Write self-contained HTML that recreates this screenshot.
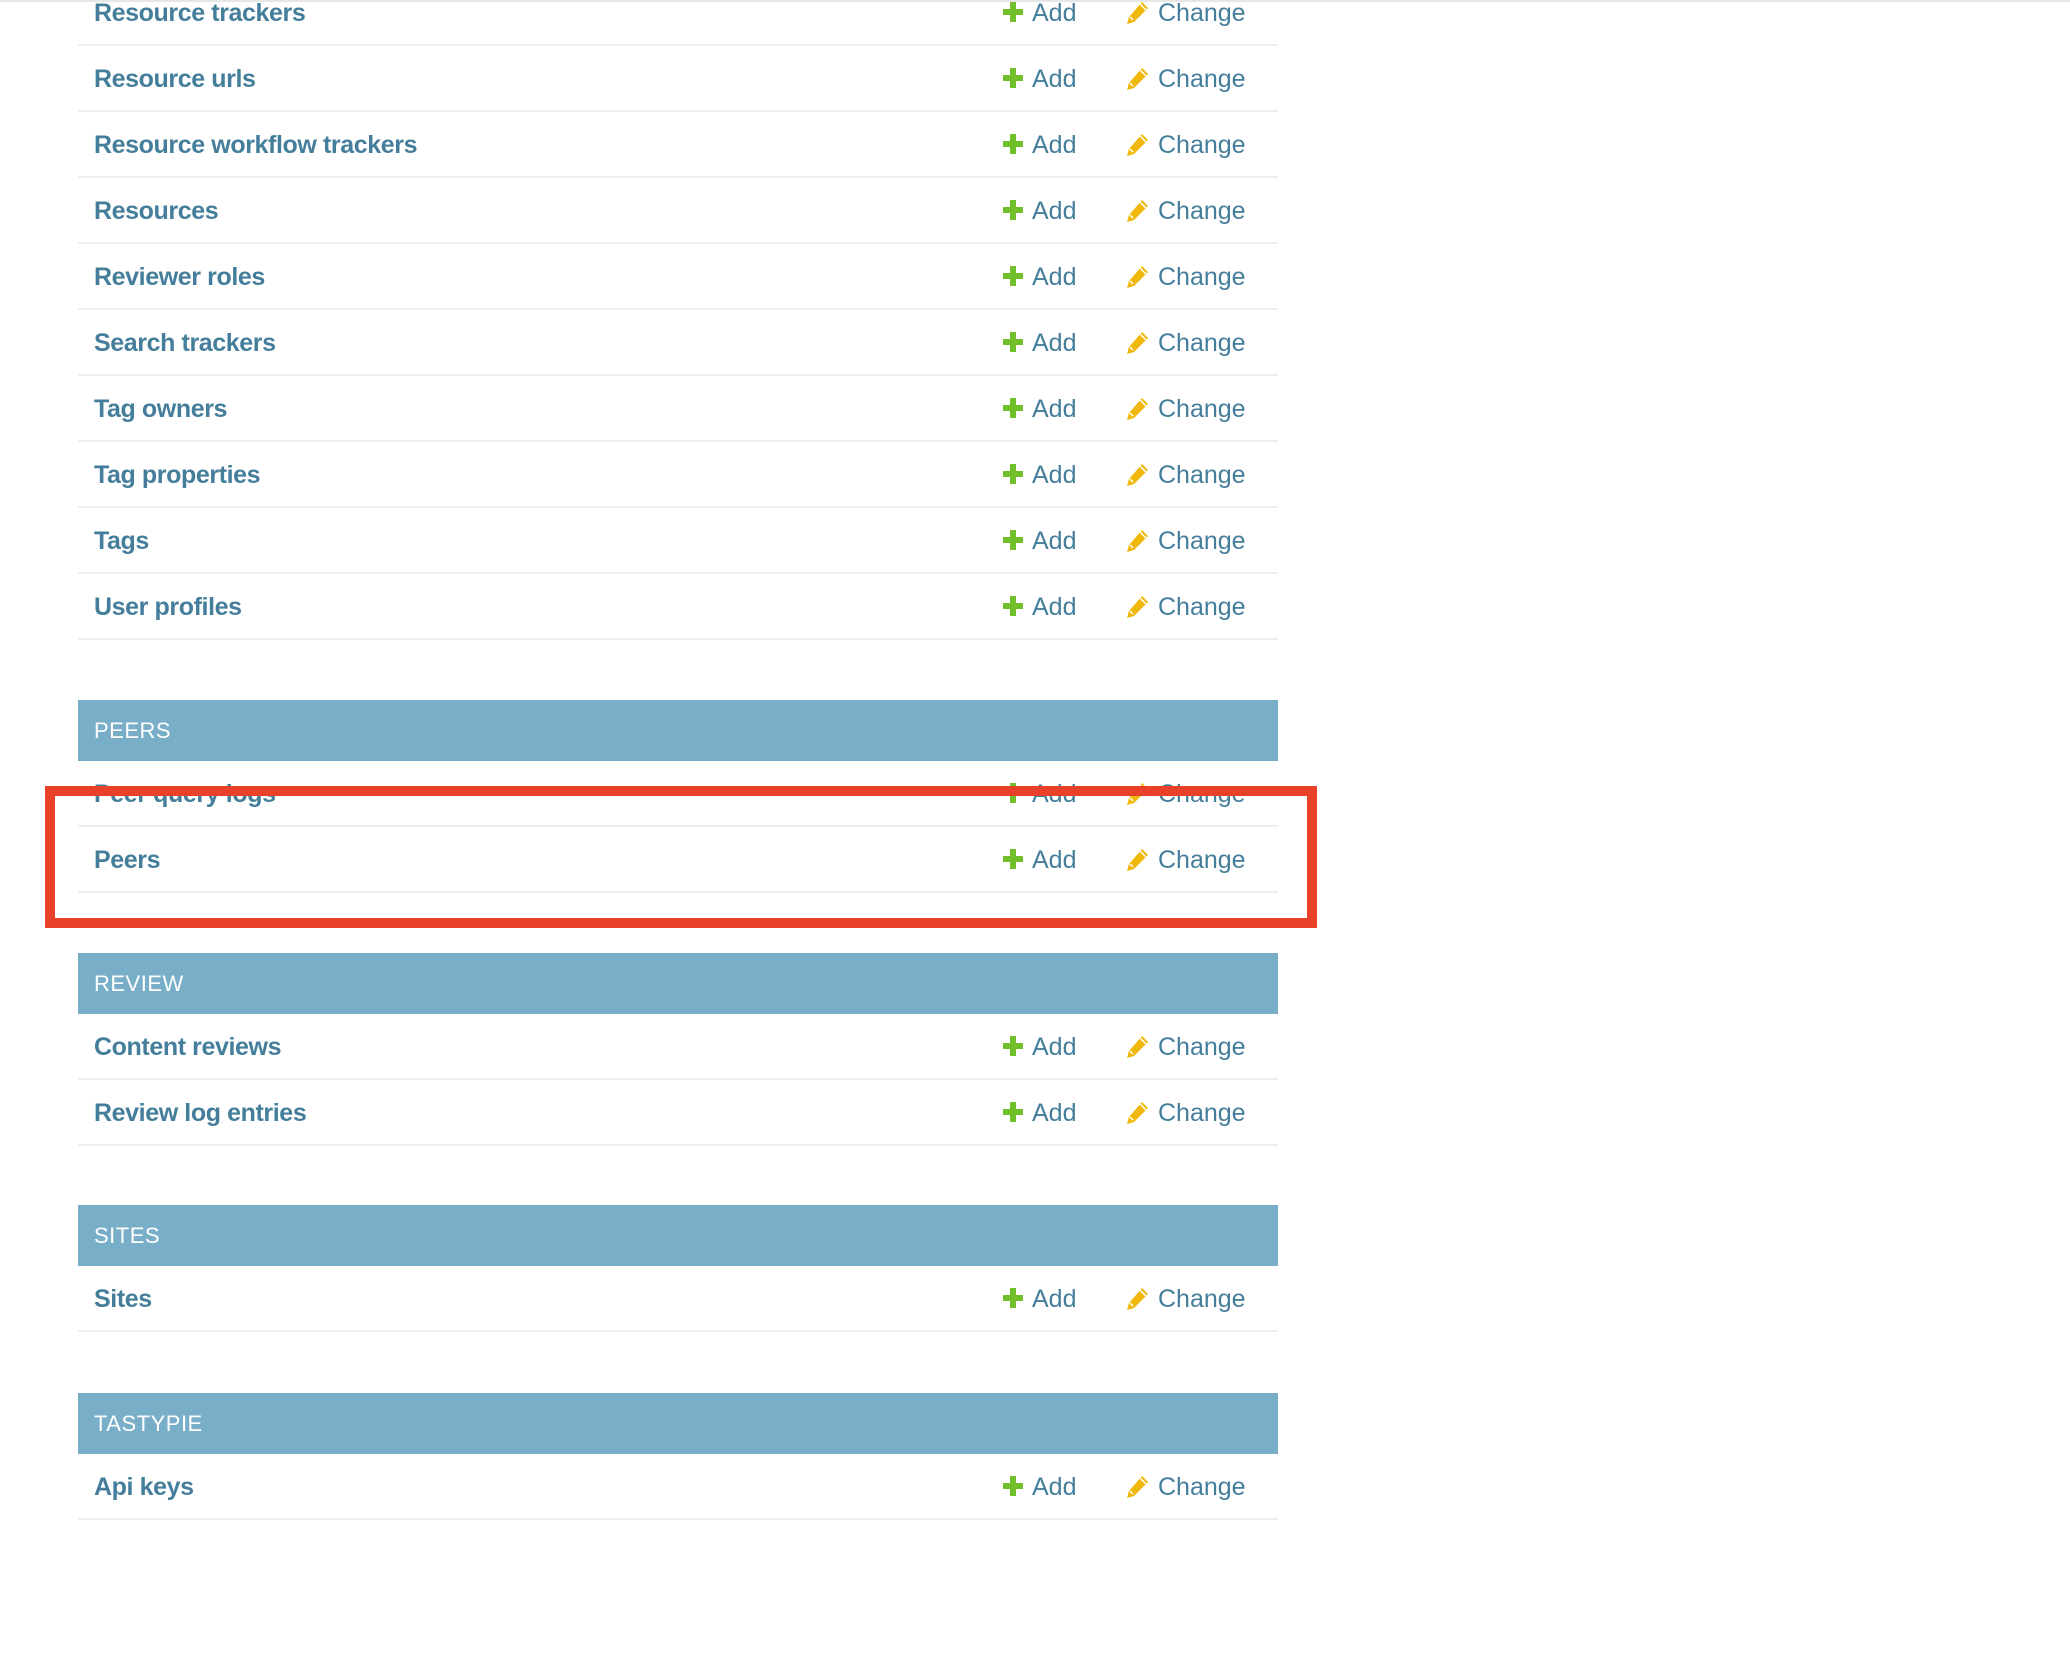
<!DOCTYPE html>
<html><head><meta charset="utf-8"><style>
body{margin:0;width:2070px;height:1656px;background:#fff;position:relative;overflow:hidden;font-family:"Liberation Sans",sans-serif;}
.top{position:absolute;left:0;top:0;width:2070px;height:2px;background:#e6e6e6}
.row{position:absolute;left:78px;width:1200px;height:66px;border-bottom:2px solid #eee;box-sizing:border-box}
.row .n{position:absolute;left:16px;top:1px;line-height:64px;font-size:25px;font-weight:bold;color:#447e9b;letter-spacing:-0.4px}
.row .a,.row .c{position:absolute;top:1px;line-height:64px;font-size:25px;color:#447e9b;letter-spacing:0px}
.row .a{left:954px}.row .c{left:1080px}
.row svg{position:absolute;top:21px}
.h{position:absolute;left:78px;width:1200px;height:61px;background:#79aec8;color:#fff;font-size:22px;line-height:61px;box-sizing:border-box;padding-left:16px;letter-spacing:0.5px}
.red{position:absolute;left:45px;top:786px;width:1272px;height:142px;border:10px solid #e94029;box-sizing:border-box}
</style></head><body>
<div class="top"></div>
<div id="c"></div>
<div class="red"></div>
<script>
var P='<svg style="left:924px" width="22" height="22" viewBox="0 0 22 22"><path d="M8 1h6v7h7v6h-7v7H8v-7H1V8h7z" fill="#70bf2b"/></svg>';
var C='<svg style="left:1047px" width="24" height="24" viewBox="0 0 24 24"><path d="M17 1l6 6L9 21l-7 2 2-7z" fill="#efb80b"/><path d="M5 16l3 3M15 3l6 6" stroke="#fff" stroke-width="1.5"/></svg>';
function row(name,top){return '<div class="row" style="top:'+top+'px"><span class="n">'+name+'</span>'+P+'<span class="a">Add</span>'+C+'<span class="c">Change</span></div>';}
var h='';
var names=["Resource trackers","Resource urls","Resource workflow trackers","Resources","Reviewer roles","Search trackers","Tag owners","Tag properties","Tags","User profiles"];
names.forEach(function(n,i){h+=row(n,-20+66*i);});
function sec(t,top,rows){h+='<div class="h" style="top:'+top+'px">'+t+'</div>';rows.forEach(function(n,i){h+=row(n,top+61+66*i);});}
sec("PEERS",700,["Peer query logs","Peers"]);
sec("REVIEW",953,["Content reviews","Review log entries"]);
sec("SITES",1205,["Sites"]);
sec("TASTYPIE",1393,["Api keys"]);
document.getElementById('c').innerHTML=h;
</script>
</body></html>
